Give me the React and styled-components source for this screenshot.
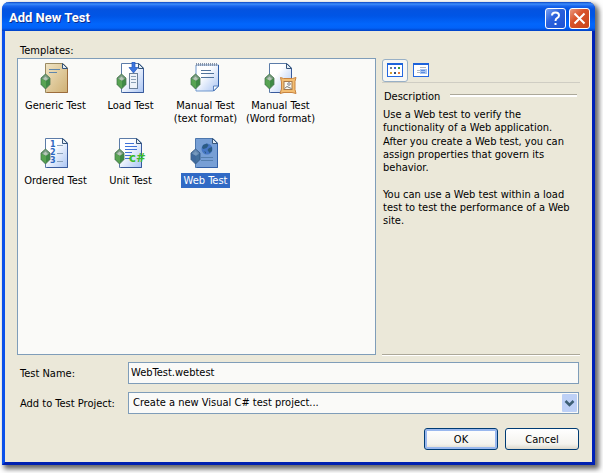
import React, { useState } from 'react';
import styled, { createGlobalStyle, css } from 'styled-components';

const Global = createGlobalStyle`
  * { box-sizing: border-box; }
  body {
    margin: 0;
    background: #fefefe;
    color: #000;
    font: 11px/13px "DejaVu Sans Condensed", Tahoma, sans-serif;
  }
  button, input, select { font: inherit; color: inherit; }
`;

const Desktop = styled.main`
  display: flex;
  min-height: 100vh;
  padding: 2px 8px 8px 2px;
`;

const Dialog = styled.form`
  flex: 1;
  display: flex;
  flex-direction: column;
  background: #ebe8d9;
  border: solid;
  border-width: 0 3px 3px;
  border-color: #0a38d0 #0022b8 #0020b0 #0a50ea;
  border-radius: 7px 7px 0 0;
  box-shadow: 3px 3px 5px 1px rgba(0, 0, 0, 0.6);
`;

const TitleBar = styled.header`
  display: flex;
  align-items: center;
  gap: 3px;
  height: 29px;
  margin: 0 -3px;
  padding: 3px 5px 0 7px;
  border-radius: 7px 7px 0 0;
  background: linear-gradient(#0a45c4 0, #3c8cfa 2px, #1a66ee 4px, #0453e0 7px, #0055e6 14px, #0266fc 22px, #0262f8 26px, #0040c4 29px);
`;

const Title = styled.h1`
  flex: 1;
  margin: 0;
  color: #fff;
  font: bold 13px/18px Roboto, "Trebuchet MS", sans-serif;
  text-shadow: 1px 1px 0 #0b2c8c;
`;

const CaptionButton = styled.button`
  display: grid;
  place-items: center;
  width: 21px;
  height: 21px;
  padding: 0;
  border: 1px solid #fff;
  border-radius: 3px;
  background: ${({ $close }) =>
    $close
      ? 'linear-gradient(135deg, #ea9a80, #d9532a 40%, #c8431a)'
      : 'linear-gradient(135deg, #7ba2f2, #2c62dc 40%, #1c52d4)'};
`;

const Content = styled.div`
  flex: 1;
  display: flex;
  flex-direction: column;
  padding: 13px 12px 12px;
`;

const SectionLabel = styled.h2`
  margin: 0 0 1px 3px;
  font-size: 11px;
  font-weight: normal;
`;

const Panes = styled.div`
  flex: 1;
  display: grid;
  grid-template-columns: minmax(0, 359fr) minmax(0, 198fr);
  column-gap: 6px;
`;

const TemplateList = styled.div`
  display: flex;
  flex-wrap: wrap;
  align-content: flex-start;
  padding: 3px 0;
  border: 1px solid #7f9db9;
  background: #fafaf8;
`;

const TemplateItem = styled.button`
  display: flex;
  flex-direction: column;
  align-items: center;
  width: 75px;
  height: 75px;
  padding: 0;
  border: 0;
  background: none;
`;

const TemplateName = styled.span`
  margin-top: 3px;
  padding: 1px 3px;
  white-space: pre;
  ${({ $selected }) => $selected && css`
    background: #316ac5;
    color: #fff;
  `}
`;

const Details = styled.aside`
  display: flex;
  flex-direction: column;
  border-bottom: 1px solid #aca899;
  box-shadow: 0 1px 0 #fff;
`;

const Toolbar = styled.div`
  display: flex;
  align-items: center;
  height: 25px;
  border-bottom: 1px solid #cfcdc3;
`;

const ViewButton = styled.button`
  display: grid;
  place-items: center;
  width: 26px;
  height: 23px;
  padding: 0;
  border: 1px solid ${({ $active }) => ($active ? '#98b0c6' : 'transparent')};
  border-radius: 3px;
  background: ${({ $active }) => ($active ? '#f7f7f3' : 'transparent')};
`;

const DescriptionTitle = styled.h2`
  display: flex;
  align-items: center;
  gap: 10px;
  margin: 7px 3px 5px 2px;
  font-size: 11px;
  font-weight: normal;

  &::after {
    content: '';
    flex: 1;
    height: 2px;
    margin-bottom: 3px;
    border-top: 1px solid #aca899;
    background: #fff;
  }
`;

const Paragraph = styled.p`
  margin: 0 0 ${({ $spaced }) => ($spaced ? 14 : 1)}px 1px;
`;

const Fields = styled.div`
  display: grid;
  grid-template-columns: 108px minmax(0, 1fr);
  align-items: center;
  row-gap: 8px;
  padding: 7px 1px 14px 3px;
`;

const fieldBox = css`
  width: 100%;
  height: 22px;
  border: 1px solid #7f9db9;
  border-radius: 0;
  outline: 0;
  background: #fafaf8;
`;

const TextInput = styled.input`
  ${fieldBox}
  padding: 0 2px 2px;
`;

const SelectWrap = styled.div`
  display: grid;
  align-items: center;

  > * { grid-area: 1 / 1; }

  > svg {
    justify-self: end;
    margin-right: 2px;
    pointer-events: none;
  }
`;

const Select = styled.select`
  ${fieldBox}
  appearance: none;
  padding: 0 20px 1px 4px;
`;

const Actions = styled.footer`
  display: flex;
  justify-content: flex-end;
  gap: 7px;
  padding-right: 1px;
`;

const PushButton = styled.button`
  width: 74px;
  height: 22px;
  padding: 0;
  border: 1px solid #003c74;
  border-radius: 3px;
  background: linear-gradient(#fff, #f4f3ee 75%, #dcd8cc);
  ${({ $primary }) => $primary && css`
    box-shadow: inset 0 0 0 2px #9ab8ee;
  `}
`;

const Numeral = styled.text`
  font: bold 8px "DejaVu Sans", sans-serif;
  fill: #2f68c0;
`;

const LanguageMark = styled.text`
  font: bold 13px "DejaVu Sans Condensed", sans-serif;
  fill: #3dbb2b;
`;

const Gem = ({ x = 2, tint }) => (
  <g transform={`translate(${x} 12)`}>
    <path d="M4.5 0 9 4v6.5L4.5 15 0 10.5V4Z" fill={tint ? '#426f9c' : '#3f8a45'} stroke={tint ? '#31547f' : '#4f7655'} strokeWidth=".8" />
    <path d="M4.5.6 8.5 4.3 5 7 .5 4.4Z" fill={tint ? '#6488b0' : '#7c9b84'} />
    <path d="M5 7v7.5L.5 10.3V4.4Z" fill={tint ? '#3f699c' : '#58a352'} />
    <path d="m2 5 2.5-2.5L7 5 4.6 6.6Z" fill={tint ? '#7699bd' : '#b7c8b8'} />
  </g>
);

const Sheet = ({ x = 6, fill = 'url(#paper)', edge = '#5b7ba8', right = '#385a9c' }) => (
  <g transform={`translate(${x} 1)`}>
    <path d="M.5.5H18l4.5 4.5v24.500H.5Z" fill={fill} stroke={edge} />
    <path d="M22.500 5v24.500H2" fill="none" stroke={right} />
    <path d="M17.500.5v5h5Z" fill="#e4edf5" stroke="#36557b" />
  </g>
);

const Gradients = () => (
  <svg width="0" height="0" aria-hidden="true">
    <defs>
      <linearGradient id="paper" x1="0" y1="0" x2="1" y2="1">
        <stop offset=".35" stopColor="#fff" />
        <stop offset="1" stopColor="#a9c4f3" />
      </linearGradient>
      <linearGradient id="tan" x1="0" y1="0" x2="1" y2="1">
        <stop offset="0" stopColor="#f0e4c4" />
        <stop offset="1" stopColor="#cfb074" />
      </linearGradient>
    </defs>
  </svg>
);

const art = {
  generic: (
    <>
      <Sheet fill="url(#tan)" edge="#9a8a62" right="#9c6c3c" />
      <path d="M10 7.500h11M10 10.500h8" stroke="#5f86ac" />
      <Gem />
    </>
  ),
  load: (
    <>
      <Sheet x={7} />
      <rect x="15.5" y="11.5" width="8" height="15" fill="#eef3f8" stroke="#6b8098" />
      <path d="M17 14.5h5M17 17.5h5M17 20.5h5" stroke="#8ba0b5" />
      <path d="M18 0h3v5.5h3L19.500 11 15 5.500h3Z" fill="#3c76df" stroke="#2456b8" strokeWidth=".7" />
      <Gem x={3} />
    </>
  ),
  text: (
    <>
      <path d="M7 3h22.500v21l-5 5H7Z" fill="url(#paper)" stroke="#6f97cd" />
      <path d="M29.500 3v21l-5 5" fill="none" stroke="#2c5ba6" />
      <path d="m24.500 29v-5h5Z" fill="#f4f8fd" stroke="#3f6cb0" strokeWidth=".8" />
      <path d="M7.500 1v3M9.500 1v3M11.500 1v3M13.500 1v3M15.500 1v3M17.500 1v3M19.500 1v3M21.500 1v3M23.500 1v3M25.500 1v3M27.500 1v3" stroke="#8492a8" />
      <path d="M12 8.500h10M12 11.500h13M12 15.500h13" stroke="#51739c" />
      <Gem />
    </>
  ),
  word: (
    <>
      <Sheet x={5} />
      <path d="m16.500 15.500 3 1h9l3.500-1-1 4v8l1 4-4-1h-8l-4 1 1.500-4.500v-7Z" fill="#f3be72" stroke="#c98440" />
      <rect x="20" y="19.500" width="8" height="8" fill="#fafaf2" stroke="#a8794a" />
      <circle cx="25" cy="22" r="1.300" fill="none" stroke="#667" strokeWidth=".8" />
      <path d="m20.500 26.500 2.500-2 2 1 2.500 1" fill="none" stroke="#777" />
      <Gem x={1} />
    </>
  ),
  ordered: (
    <>
      <Sheet />
      <Numeral x="11" y="10">1</Numeral>
      <Numeral x="11" y="18">2</Numeral>
      <Numeral x="11" y="26">3</Numeral>
      <path d="M18 8.500h6M18 16.500h6M18 24.500h6" stroke="#8ba2bb" />
      <Gem />
    </>
  ),
  unit: (
    <>
      <Sheet x={5} />
      <path d="M11 6.500h9M11 9.500h12M11 12.500h12M11 15.500h7M11 18.500h6M11 21.500h6" stroke="#3f72d8" />
      <LanguageMark x="15" y="25">c#</LanguageMark>
      <Gem x={1} />
    </>
  ),
  web: (
    <>
      <Sheet fill="#779fd5" edge="#4d77ad" right="#315fa6" />
      <circle cx="18" cy="12" r="5.500" fill="#4677c4" />
      <path d="m14 8 4-1.500 1.500 2-2 2.500-3 1-1.500-1ZM20 11l3-1v4l-2.500 2-2-3ZM15 14l2 1v2Z" fill="#2b5b83" />
      <path d="M12 20.500h12M12 23.500h12" stroke="#557fae" />
      <Gem tint />
    </>
  ),
};

const TEMPLATES = [
  { id: 'generic', name: 'Generic Test' },
  { id: 'load', name: 'Load Test' },
  { id: 'text', name: 'Manual Test\n(text format)' },
  { id: 'word', name: 'Manual Test\n(Word format)' },
  { id: 'ordered', name: 'Ordered Test' },
  { id: 'unit', name: 'Unit Test' },
  { id: 'web', name: 'Web Test' },
];

const TILES = ['#708090', '#3c62d4', '#3d9a40', '#d8a030', '#304c80', '#e87834'];

const ViewFrame = ({ children }) => (
  <svg width="16" height="14" viewBox="0 0 16 14" aria-hidden="true">
    <rect x=".5" y=".5" width="15" height="13" fill="#fff" stroke="#2468e0" />
    <path d="M0 1h16" stroke="#1c62da" strokeWidth="2" />
    {children}
  </svg>
);

export default function App() {
  const [selected, setSelected] = useState('web');
  const [view, setView] = useState('large');

  return (
    <>
      <Global />
      <Desktop>
        <Dialog onSubmit={(e) => e.preventDefault()}>
          <TitleBar>
            <Title>Add New Test</Title>
            <CaptionButton type="button" aria-label="Help">
              <svg width="13" height="15" viewBox="0 0 13 15" aria-hidden="true">
                <path d="M3 4.500Q3 1.500 6.500 1.500T10 4.500Q10 6 8 7.200 6.500 8 6.500 10" fill="none" stroke="#fff" strokeWidth="2" />
                <path d="M5.500 12h2v2h-2Z" fill="#fff" />
              </svg>
            </CaptionButton>
            <CaptionButton type="button" aria-label="Close" $close>
              <svg width="13" height="13" viewBox="0 0 13 13" aria-hidden="true">
                <path d="m1.500 1.500 10 10m0-10-10 10" stroke="#fff" strokeWidth="2" />
              </svg>
            </CaptionButton>
          </TitleBar>

          <Content>
            <SectionLabel id="templates">Templates:</SectionLabel>
            <Panes>
              <TemplateList role="listbox" aria-labelledby="templates">
                <Gradients />
                {TEMPLATES.map(({ id, name }) => (
                  <TemplateItem
                    key={id}
                    type="button"
                    role="option"
                    aria-selected={id === selected}
                    onClick={() => setSelected(id)}
                  >
                    <svg width="33" height="33" viewBox="0 0 33 33" aria-hidden="true">
                      {art[id]}
                    </svg>
                    <TemplateName $selected={id === selected}>{name}</TemplateName>
                  </TemplateItem>
                ))}
              </TemplateList>

              <Details>
                <Toolbar>
                  <ViewButton type="button" aria-label="Large icons" $active={view === 'large'} onClick={() => setView('large')}>
                    <ViewFrame>
                      {TILES.map((color, i) => (
                        <rect key={color} x={3 + (i % 3) * 4} y={i < 3 ? 4 : 9} width="2" height="2" fill={color} />
                      ))}
                    </ViewFrame>
                  </ViewButton>
                  <ViewButton type="button" aria-label="Small icons" $active={view === 'small'} onClick={() => setView('small')}>
                    <ViewFrame>
                      <rect x="7" y="6" width="7" height="5" fill="#a8c4f0" />
                      <path d="M7 4.500h6M4 7.500h3M4 9.500h3" stroke="#b0b8c4" />
                      <path d="M8 7.500h4M8 9.500h4" stroke="#5c8ce0" />
                    </ViewFrame>
                  </ViewButton>
                </Toolbar>
                <DescriptionTitle>Description</DescriptionTitle>
                <Paragraph>Use a Web test to verify the functionality of a Web application.</Paragraph>
                <Paragraph $spaced>After you create a Web test, you can assign properties that govern its behavior.</Paragraph>
                <Paragraph>You can use a Web test within a load test to test the performance of a Web site.</Paragraph>
              </Details>
            </Panes>

            <Fields>
              <label htmlFor="test-name">Test Name:</label>
              <TextInput id="test-name" defaultValue="WebTest.webtest" />
              <label htmlFor="project">Add to Test Project:</label>
              <SelectWrap>
                <Select id="project">
                  <option>Create a new Visual C# test project...</option>
                </Select>
                <svg width="15" height="18" viewBox="0 0 15 18" aria-hidden="true">
                  <rect width="15" height="18" rx="1" fill="#bdd0f6" />
                  <path d="m3.500 7 4 4 4-4" fill="none" stroke="#3d5f74" strokeWidth="2.500" />
                </svg>
              </SelectWrap>
            </Fields>

            <Actions>
              <PushButton type="submit" $primary>OK</PushButton>
              <PushButton type="button">Cancel</PushButton>
            </Actions>
          </Content>
        </Dialog>
      </Desktop>
    </>
  );
}
